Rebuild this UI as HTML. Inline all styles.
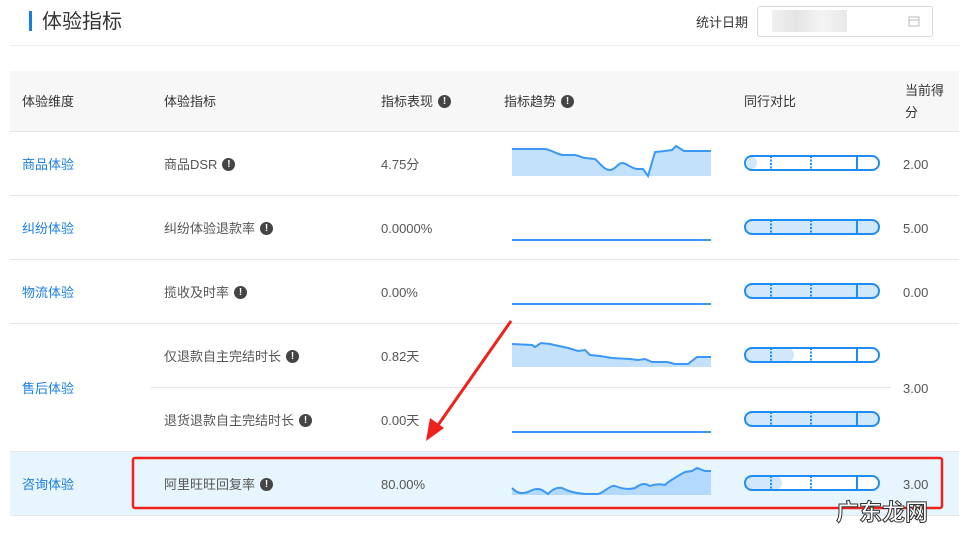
<!DOCTYPE html>
<html><head><meta charset="utf-8"><style>
body{margin:0;width:969px;height:540px;background:#fff;position:relative;overflow:hidden;font-family:"Liberation Sans","Noto Sans CJK SC",sans-serif;}
.a{position:absolute;white-space:nowrap;line-height:18px}
.t{font-size:13px;color:#555}
.b{font-size:13px;color:#1a7de0}
.h{font-size:13px;color:#333}
.i{display:inline-block;width:13px;height:13px;border-radius:50%;background:#444;color:#fff;font-size:10px;line-height:13px;text-align:center;font-weight:bold;vertical-align:middle;margin-left:5px;position:relative;top:-1px}
.ln{position:absolute;height:1px;background:#e6e6e6}
</style></head><body>
<div class="a" style="left:29px;top:11px;width:3px;height:20px;background:#1a7de0"></div>
<div class="a" style="left:42px;top:9px;font-size:20px;line-height:26px;color:#333">体验指标</div>
<div class="a h" style="left:696px;top:14px">统计日期</div>
<div class="a" style="left:757px;top:6px;width:176px;height:31px;border:1px solid #d9d9d9;border-radius:3px;box-sizing:border-box"></div>
<div class="a" style="left:772px;top:10px;width:75px;height:22px;background:linear-gradient(90deg,#f0f0f0,#e4e4e4,#f4f4f4,#e8e8e8)"></div>
<svg class="a" style="left:908px;top:15px" width="12" height="12"><rect x="1" y="2" width="10" height="9" fill="none" stroke="#bbb"/><line x1="1" y1="5" x2="11" y2="5" stroke="#bbb"/></svg>
<div class="ln" style="left:10px;top:45px;width:950px;background:#eee"></div>
<div class="a" style="left:10px;top:71px;width:949px;height:60px;background:#f7f7f7"></div>
<div class="ln" style="left:10px;top:131px;width:949px"></div>
<div class="a h" style="left:22px;top:93px">体验维度</div>
<div class="a h" style="left:164px;top:93px">体验指标</div>
<div class="a h" style="left:381px;top:93px">指标表现<span class="i">!</span></div>
<div class="a h" style="left:504px;top:93px">指标趋势<span class="i">!</span></div>
<div class="a h" style="left:744px;top:93px">同行对比</div>
<div class="a h" style="left:905px;top:80px;line-height:22px">当前得<br>分</div>
<div class="a" style="left:10px;top:452px;width:949px;height:63px;background:#e6f5fe"></div>
<div class="ln" style="left:10px;top:195px;width:949px"></div>
<div class="ln" style="left:10px;top:259px;width:949px"></div>
<div class="ln" style="left:10px;top:323px;width:949px"></div>
<div class="ln" style="left:151px;top:387px;width:740px"></div>
<div class="ln" style="left:10px;top:451px;width:949px"></div>
<div class="ln" style="left:10px;top:515px;width:949px"></div>
<div class="a b" style="left:22px;top:156px">商品体验</div>
<div class="a b" style="left:22px;top:220px">纠纷体验</div>
<div class="a b" style="left:22px;top:284px">物流体验</div>
<div class="a b" style="left:22px;top:380px">售后体验</div>
<div class="a b" style="left:22px;top:476px">咨询体验</div>
<div class="a t" style="left:164px;top:156px">商品DSR<span class="i">!</span></div>
<div class="a t" style="left:164px;top:220px">纠纷体验退款率<span class="i">!</span></div>
<div class="a t" style="left:164px;top:284px">揽收及时率<span class="i">!</span></div>
<div class="a t" style="left:164px;top:348px">仅退款自主完结时长<span class="i">!</span></div>
<div class="a t" style="left:164px;top:412px">退货退款自主完结时长<span class="i">!</span></div>
<div class="a t" style="left:164px;top:476px">阿里旺旺回复率<span class="i">!</span></div>
<div class="a t" style="left:381px;top:156px">4.75分</div>
<div class="a t" style="left:381px;top:220px">0.0000%</div>
<div class="a t" style="left:381px;top:284px">0.00%</div>
<div class="a t" style="left:381px;top:348px">0.82天</div>
<div class="a t" style="left:381px;top:412px">0.00天</div>
<div class="a t" style="left:381px;top:476px">80.00%</div>
<div class="a t" style="left:903px;top:156px">2.00</div>
<div class="a t" style="left:903px;top:220px">5.00</div>
<div class="a t" style="left:903px;top:284px">0.00</div>
<div class="a t" style="left:903px;top:380px">3.00</div>
<div class="a t" style="left:903px;top:476px">3.00</div>
<svg class="a" style="left:0;top:0" width="969" height="540">
<g stroke="#3b98f5" stroke-width="2" fill="none">
<path d="M512,149 L545,149 C552,150 558,155 563,155 L575,155 C580,156 583,158 585,158 L595,159 C600,163 604,170 610,170 C615,170 618,163 622,163 C627,163 630,168 637,169 L643,169 L648,176 L655,152 L665,151 L672,150 L676,146 L684,151 L711,151 L711,176 L512,176Z" fill="#c3e1fb" stroke="none"/>
<path d="M512,149 L545,149 C552,150 558,155 563,155 L575,155 C580,156 583,158 585,158 L595,159 C600,163 604,170 610,170 C615,170 618,163 622,163 C627,163 630,168 637,169 L643,169 L648,176 L655,152 L665,151 L672,150 L676,146 L684,151 L711,151"/>
<line x1="512" y1="240" x2="711" y2="240"/>
<line x1="512" y1="304" x2="711" y2="304"/>
<line x1="512" y1="432" x2="711" y2="432"/>
<path d="M512,344 L532,345 L535,347 L541,343 L550,344 L568,348 L578,351 L585,350 L590,355 L600,356 L612,358 L630,359 L638,360 L645,359 L652,362 L667,362 L675,364 L688,364 L697,357 L711,357 L711,367 L512,367Z" fill="#c3e1fb" stroke="none"/>
<path d="M512,344 L532,345 L535,347 L541,343 L550,344 L568,348 L578,351 L585,350 L590,355 L600,356 L612,358 L630,359 L638,360 L645,359 L652,362 L667,362 L675,364 L688,364 L697,357 L711,357"/>
<path d="M512,488 C518,494 522,494 528,492 C534,489 538,488 542,490 L548,494 C552,490 556,487 562,488 C566,490 572,493 585,494 L598,494 C605,492 610,485 615,486 C620,488 628,490 635,488 C642,483 645,483 650,486 C655,484 660,484 665,485 C670,480 680,475 685,472 L692,471 L697,468 L705,471 L711,471 L711,495 L512,495Z" fill="#b3dafd" stroke="none"/>
<path d="M512,488 C518,494 522,494 528,492 C534,489 538,488 542,490 L548,494 C552,490 556,487 562,488 C566,490 572,493 585,494 L598,494 C605,492 610,485 615,486 C620,488 628,490 635,488 C642,483 645,483 650,486 C655,484 660,484 665,485 C670,480 680,475 685,472 L692,471 L697,468 L705,471 L711,471"/>
</g>
<g>
<rect x="745" y="156" width="134" height="14" rx="7" fill="#fff"/><ellipse cx="752" cy="163" rx="5" ry="6" fill="#d0e7fc"/>
<rect x="745" y="220" width="134" height="14" rx="7" fill="#d0e7fc"/>
<rect x="745" y="284" width="134" height="14" rx="7" fill="#d0e7fc"/>
<rect x="745" y="348" width="134" height="14" rx="7" fill="#fff"/><rect x="745" y="348" width="49" height="14" rx="7" fill="#d0e7fc"/>
<rect x="745" y="412" width="134" height="14" rx="7" fill="#d0e7fc"/>
<rect x="745" y="476" width="134" height="14" rx="7" fill="#fff"/><rect x="745" y="476" width="37" height="14" rx="7" fill="#d0e7fc"/>
</g>
<g stroke="#1e8cf5" stroke-width="2" fill="none">
<rect x="745" y="156" width="134" height="14" rx="7"/><rect x="745" y="220" width="134" height="14" rx="7"/><rect x="745" y="284" width="134" height="14" rx="7"/><rect x="745" y="348" width="134" height="14" rx="7"/><rect x="745" y="412" width="134" height="14" rx="7"/><rect x="745" y="476" width="134" height="14" rx="7"/>
</g>
<g stroke="#1e8cf5" stroke-width="2">
<g stroke-dasharray="2,1.5"><line x1="771" y1="156" x2="771" y2="170"/><line x1="811" y1="156" x2="811" y2="170"/><line x1="771" y1="220" x2="771" y2="234"/><line x1="811" y1="220" x2="811" y2="234"/><line x1="771" y1="284" x2="771" y2="298"/><line x1="811" y1="284" x2="811" y2="298"/><line x1="771" y1="348" x2="771" y2="362"/><line x1="811" y1="348" x2="811" y2="362"/><line x1="771" y1="412" x2="771" y2="426"/><line x1="811" y1="412" x2="811" y2="426"/><line x1="771" y1="476" x2="771" y2="490"/><line x1="811" y1="476" x2="811" y2="490"/></g>
<line x1="857" y1="156" x2="857" y2="170"/><line x1="857" y1="220" x2="857" y2="234"/><line x1="857" y1="284" x2="857" y2="298"/><line x1="857" y1="348" x2="857" y2="362"/><line x1="857" y1="412" x2="857" y2="426"/><line x1="857" y1="476" x2="857" y2="490"/>
</g>
<rect x="133" y="458" width="809" height="50" rx="2" fill="none" stroke="#f0211a" stroke-width="2.5"/>
<line x1="511" y1="321" x2="436" y2="428" stroke="#f0211a" stroke-width="3"/>
<polygon points="426,441 430,418 444,428" fill="#f0211a"/>
<text x="836" y="520" font-family="Liberation Sans,Noto Sans CJK SC,sans-serif" font-size="23" font-weight="bold" fill="#fff" stroke="#333" stroke-width="1">广东龙网</text>
</svg>
</body></html>
